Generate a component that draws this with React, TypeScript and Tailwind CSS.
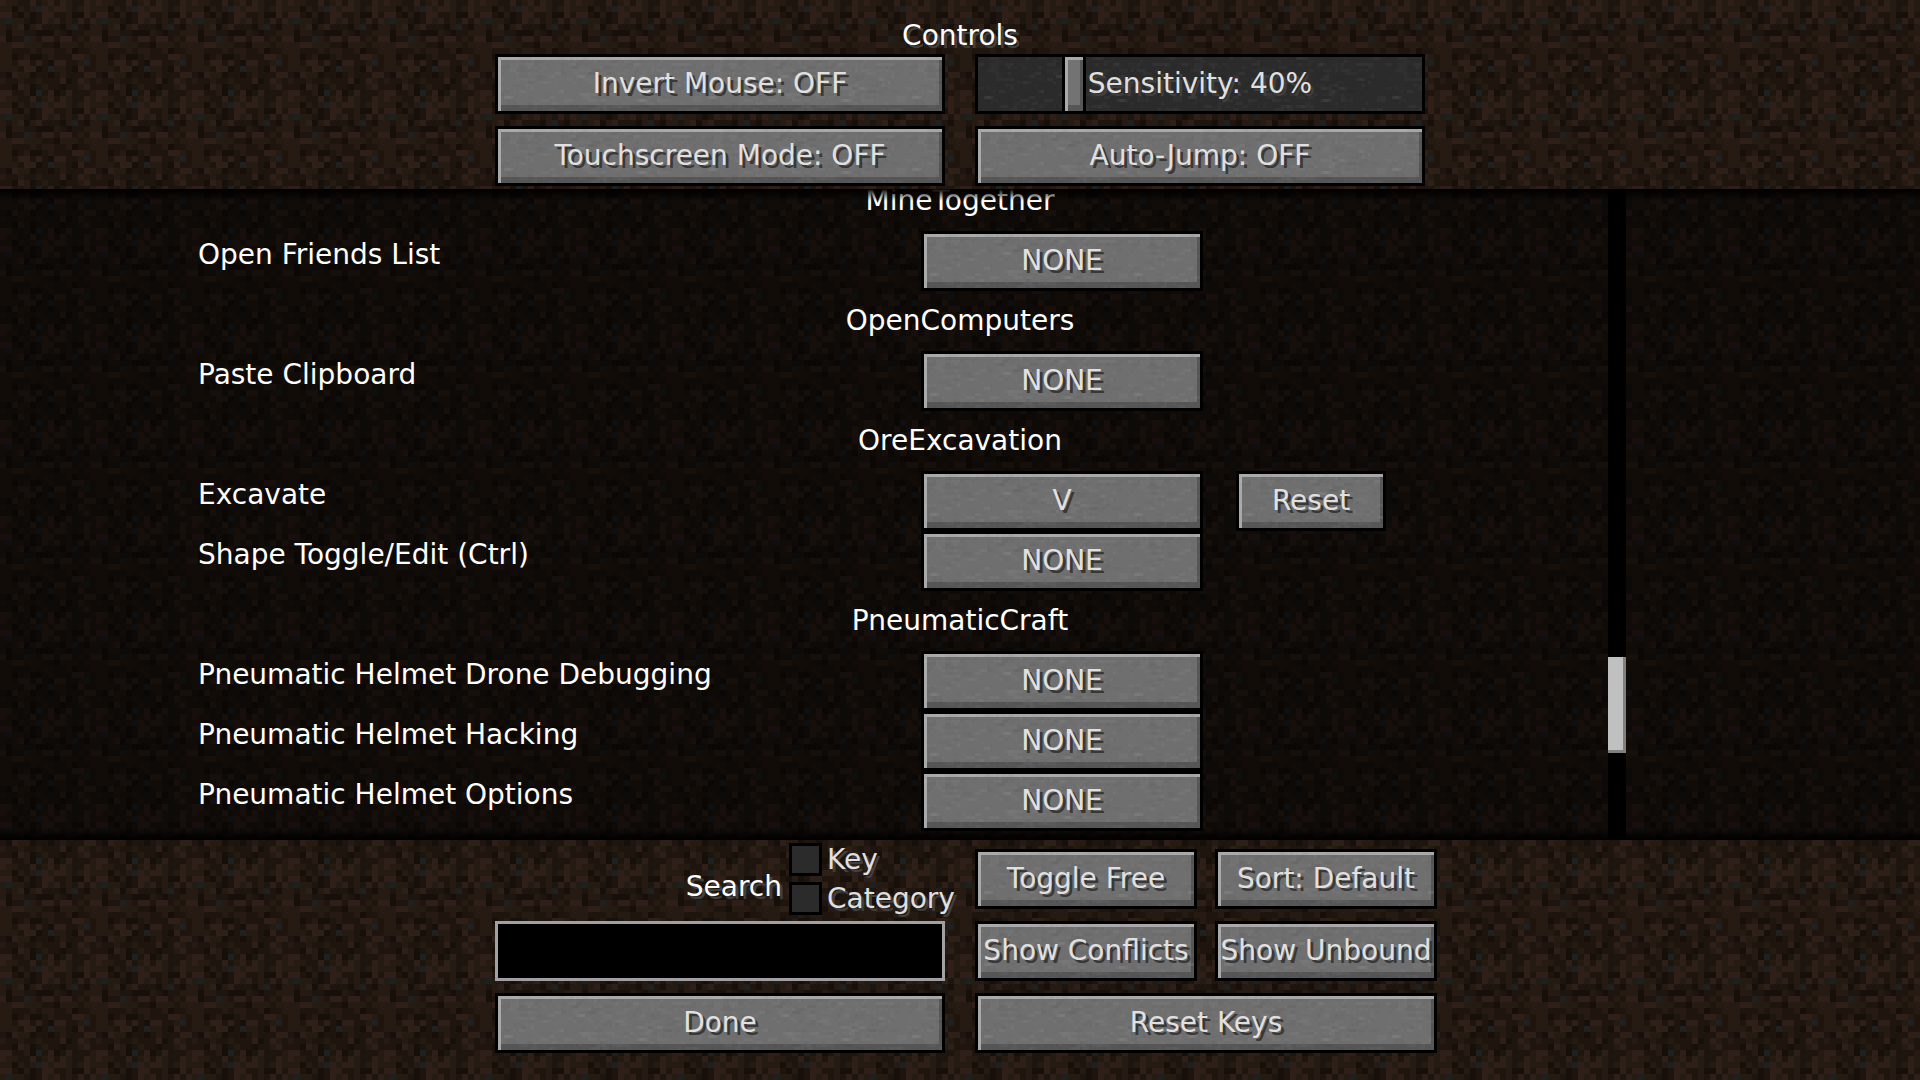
import React, { useState } from "react";

/* One 16x16 block of dirt; each digit is a shade, "b" is a pebble. */
const DIRT = [
  "3221131231321132",
  "220212b323321232",
  "3310201331120031",
  "2b22101323121313",
  "212302311102b102",
  "2022110002101122",
  "3011b21331331213",
  "2233222110222122",
  "2211121221120112",
  "2201200121113321",
  "22133131033112b1",
  "22213301b2210311",
  "1032201101211133",
  "2112112111301321",
  "1103201211011231",
  "331120b130131112",
];
const SHADE: Record<string, string> = {
  "0": "#160f0a",
  "1": "#1e150f",
  "2": "#251b12",
  "3": "#2e2018",
  b: "#1e2122",
};

function Dirt({ id, y = 0, dim = false }: { id: string; y?: number; dim?: boolean }) {
  return (
    <svg aria-hidden="true" className="pointer-events-none absolute inset-0 h-full w-full" shapeRendering="crispEdges">
      <defs>
        <pattern id={id} x="0" y={y} width="96" height="96" patternUnits="userSpaceOnUse">
          <rect width="96" height="96" fill={SHADE["1"]} />
          {DIRT.flatMap((row, r) =>
            row.split("").map((c, i) => (
              <rect key={`${r}-${i}`} x={i * 6} y={r * 6} width="6" height="6" fill={SHADE[c]} />
            ))
          )}
        </pattern>
      </defs>
      <rect width="100%" height="100%" fill={`url(#${id})`} />
      {dim && <rect width="100%" height="100%" fill="#000" opacity="0.52" />}
    </svg>
  );
}

/* Faint speckles of the stone texture, in 3px cells. */
function speckles() {
  const out: { x: number; y: number; w: number; light: boolean; o: number }[] = [];
  let s = 4711;
  const next = () => {
    s = (s * 16807) % 2147483647;
    return s / 2147483647;
  };
  for (let i = 0; i < 420; i++) {
    out.push({
      x: Math.floor(next() * 66) * 3,
      y: Math.floor(next() * 20) * 3,
      w: (1 + Math.floor(next() * 3)) * 3,
      light: next() > 0.45,
      o: 0.01 + next() * 0.025,
    });
  }
  return out;
}
const SPECKLES = speckles();

function StonePattern() {
  return (
    <svg aria-hidden="true" className="absolute h-0 w-0" shapeRendering="crispEdges">
      <defs>
        <pattern id="stone" width="204" height="60" patternUnits="userSpaceOnUse">
          {SPECKLES.map((p, i) => (
            <rect key={i} x={p.x} y={p.y} width={p.w} height="3" fill={p.light ? "#fff" : "#000"} opacity={p.o} />
          ))}
        </pattern>
      </defs>
    </svg>
  );
}

function Stone() {
  return (
    <svg aria-hidden="true" className="pointer-events-none absolute inset-0 h-full w-full" shapeRendering="crispEdges">
      <rect width="100%" height="100%" fill="url(#stone)" />
    </svg>
  );
}

function McButton({ children, className = "" }: { children: React.ReactNode; className?: string }) {
  return (
    <button
      type="button"
      className={`relative flex h-[60px] items-center justify-center whitespace-nowrap border-3 border-black bg-[#6f6f6f] text-[#e0e0e0] shadow-[inset_3px_3px_0_#a9a9a9,inset_-3px_-6px_0_#565656] [text-shadow:3px_3px_0_#383838] hover:bg-[#7380a8] ${className}`}
    >
      <Stone />
      <span className="relative">{children}</span>
    </button>
  );
}

function Slider() {
  const [value, setValue] = useState(41);
  const shown = value === 41 ? 40 : value;
  return (
    <div className="relative h-[60px] border-3 border-black bg-[#2b2b2b]">
      <Stone />
      <input
        type="range"
        aria-label="Sensitivity"
        min={0}
        max={200}
        value={value}
        onChange={(e) => setValue(Number(e.target.value))}
        className="absolute -inset-[3px] m-0 h-[60px] w-[calc(100%+6px)] cursor-pointer appearance-none bg-transparent [&::-webkit-slider-thumb]:h-[60px] [&::-webkit-slider-thumb]:w-6 [&::-webkit-slider-thumb]:appearance-none [&::-webkit-slider-thumb]:border-3 [&::-webkit-slider-thumb]:border-black [&::-webkit-slider-thumb]:bg-[#737373] [&::-webkit-slider-thumb]:shadow-[inset_3px_3px_0_#a9a9a9,inset_-3px_-6px_0_#565656]"
      />
      <span className="pointer-events-none absolute inset-0 flex items-center justify-center text-[#e0e0e0]">
        Sensitivity: {shown}%
      </span>
    </div>
  );
}

type Binding = { name: string; keyName: string; changed?: boolean };
const CATEGORIES: { title: string; bindings: Binding[] }[] = [
  { title: "MineTogether", bindings: [{ name: "Open Friends List", keyName: "NONE" }] },
  { title: "OpenComputers", bindings: [{ name: "Paste Clipboard", keyName: "NONE" }] },
  {
    title: "OreExcavation",
    bindings: [
      { name: "Excavate", keyName: "V", changed: true },
      { name: "Shape Toggle/Edit (Ctrl)", keyName: "NONE" },
    ],
  },
  {
    title: "PneumaticCraft",
    bindings: [
      { name: "Pneumatic Helmet Drone Debugging", keyName: "NONE" },
      { name: "Pneumatic Helmet Hacking", keyName: "NONE" },
      { name: "Pneumatic Helmet Options", keyName: "NONE" },
    ],
  },
];

function BindingRow({ binding }: { binding: Binding }) {
  return (
    <li className="flex h-[60px]">
      <span className="flex-1 whitespace-nowrap pl-[198px] leading-[47px]">{binding.name}</span>
      <div className="flex w-[calc(50%+39px)] gap-[33px]">
        <McButton className="w-[282px]">{binding.keyName}</McButton>
        {binding.changed && <McButton className="w-[150px]">Reset</McButton>}
      </div>
    </li>
  );
}

function SearchOption({ label }: { label: string }) {
  return (
    <label className="flex h-[33px] items-center gap-[5px] whitespace-nowrap text-[#e0e0e0]">
      <input type="checkbox" className="h-[33px] w-[33px] shrink-0 appearance-none border-3 border-black bg-[#2b2b2b] checked:bg-[#8a8a8a]" />
      <span>{label}</span>
    </label>
  );
}

export default function App() {
  return (
    <div className="relative flex h-screen flex-col overflow-hidden bg-[#1f160f] font-['DejaVu_Sans',sans-serif] text-[28px] leading-8 text-white">
      <StonePattern />
      <Dirt id="dirt" />

      <header className="relative flex flex-col items-center pb-[3px] pt-5 [text-shadow:3px_3px_0_#3f3f3f]">
        <h1 className="mb-[2px]">Controls</h1>
        <div className="grid grid-cols-[450px_450px] gap-x-[30px] gap-y-3">
          <McButton>Invert Mouse: OFF</McButton>
          <Slider />
          <McButton>Touchscreen Mode: OFF</McButton>
          <McButton>Auto-Jump: OFF</McButton>
        </div>
      </header>

      <main className="relative min-h-0 flex-1 overflow-hidden">
        <Dirt id="dirt-list" y={45} dim />
        <div className="relative -mt-[18px]">
          {CATEGORIES.map((category) => (
            <section key={category.title}>
              <h2 className="flex h-[60px] items-center justify-center">{category.title}</h2>
              <ul>
                {category.bindings.map((binding) => (
                  <BindingRow key={binding.name} binding={binding} />
                ))}
              </ul>
            </section>
          ))}
        </div>
        <div className="pointer-events-none absolute inset-x-0 top-0 h-3 bg-linear-to-b from-black to-transparent" />
        <div className="pointer-events-none absolute inset-x-0 bottom-0 h-3 bg-linear-to-t from-black to-transparent" />
        <div className="absolute inset-y-0 left-[calc(50%+648px)] w-[18px] bg-black pt-[468px]">
          <div className="h-24 border-b-3 border-r-3 border-[#808080] bg-[#c0c0c0]" />
        </div>
      </main>

      <footer className="relative flex justify-center gap-[30px] pb-[27px] pl-3 pt-[3px] [text-shadow:3px_3px_0_#3f3f3f]">
        <div className="flex w-[450px] flex-col">
          <div className="mb-[6px] flex h-[72px] items-center gap-[7px]">
            <label htmlFor="search" className="w-[287px] pt-4 text-right">
              Search
            </label>
            <div className="flex w-0 flex-col gap-[6px]">
              <SearchOption label="Key" />
              <SearchOption label="Category" />
            </div>
          </div>
          <input id="search" type="text" className="mb-3 h-[60px] border-3 border-[#a0a0a0] bg-black px-3 outline-none" />
          <McButton>Done</McButton>
        </div>
        <div className="grid grid-cols-[222px_222px] content-start gap-x-[18px] gap-y-3 pt-[6px]">
          <McButton>Toggle Free</McButton>
          <McButton>Sort: Default</McButton>
          <McButton>Show Conflicts</McButton>
          <McButton>Show Unbound</McButton>
          <McButton className="col-span-2">Reset Keys</McButton>
        </div>
      </footer>
    </div>
  );
}
